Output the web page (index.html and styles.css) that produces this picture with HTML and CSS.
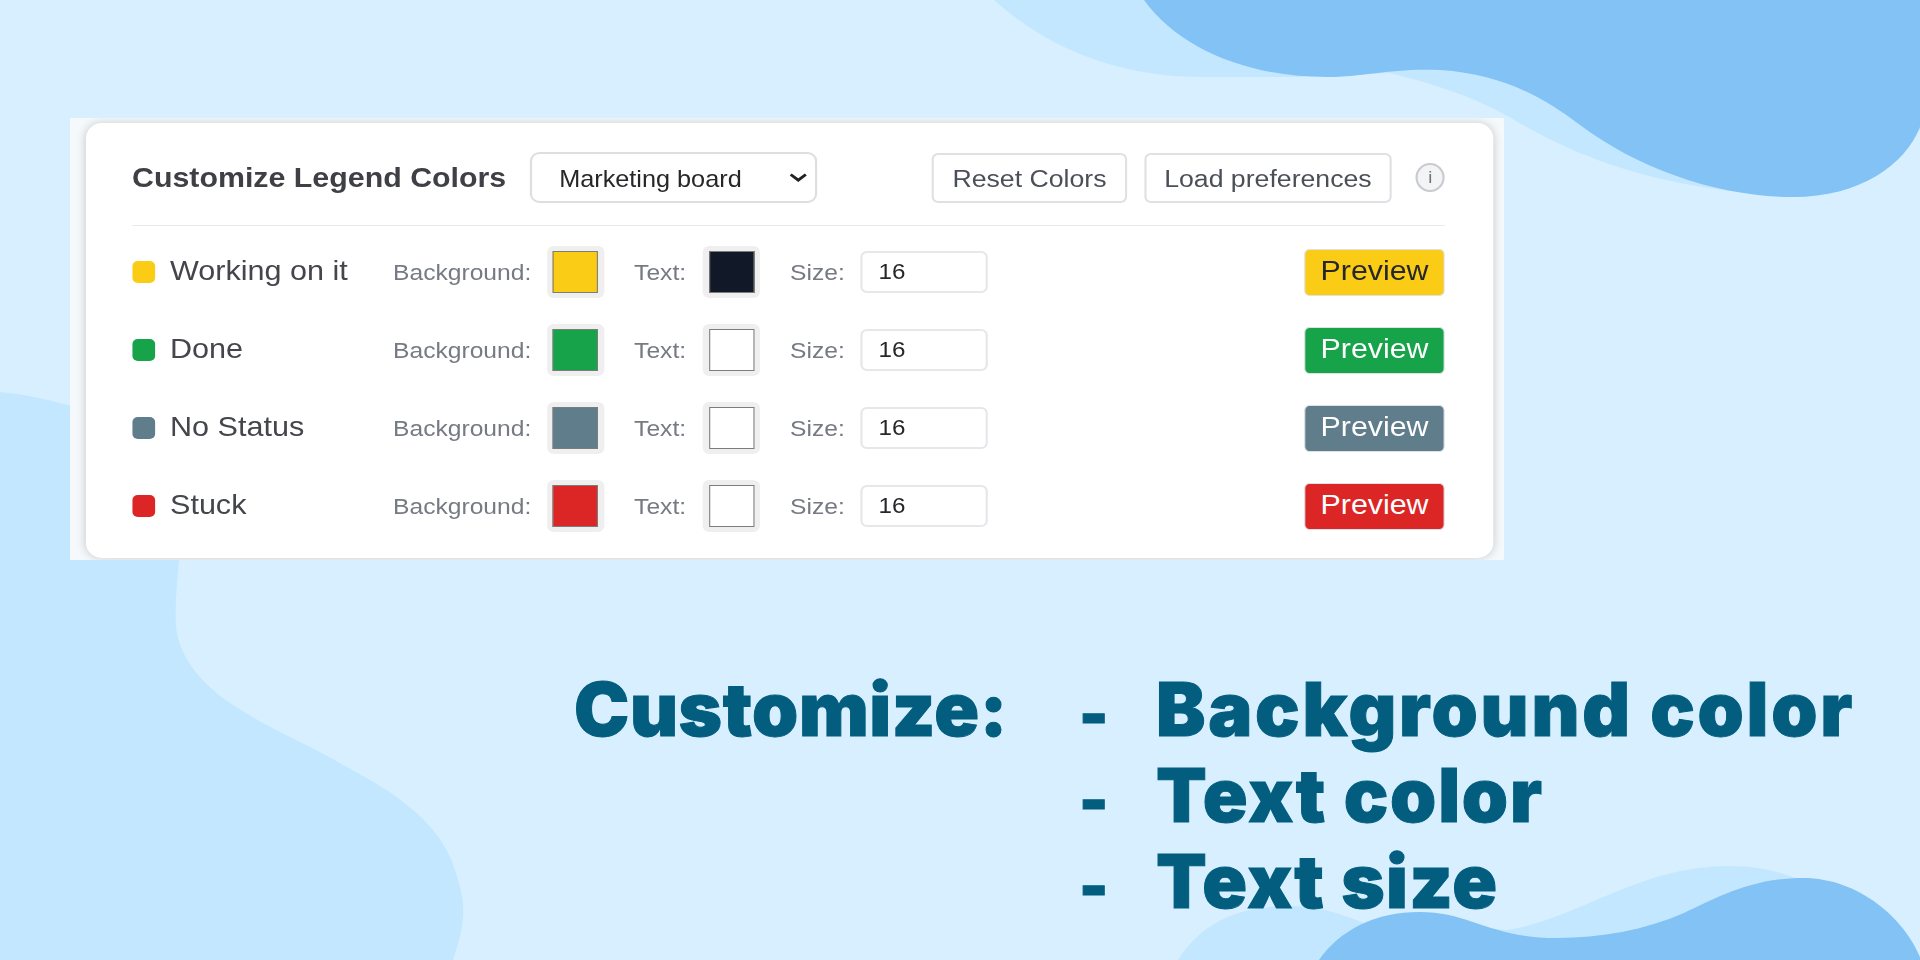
FILE: index.html
```html
<!DOCTYPE html>
<html lang="en">
<head>
<meta charset="utf-8">
<title>Customize Legend Colors</title>
<link rel="stylesheet" href="styles.css">
</head>
<body>
<svg class="waves" viewBox="0 0 1920 960" aria-hidden="true">
  <path class="light" d="M994 0C1050 50 1120 77 1205 77L1300 77L1389 73C1440 85 1480 100 1511 118C1590 165 1670 190 1800 197L1920 130V0Z"/>
  <path class="dark" d="M1144 0C1180 50 1250 77 1327 77C1365 77 1390 68 1440 70C1500 74 1540 95 1580 125C1640 170 1720 197 1793 197C1860 197 1905 165 1920 127V0Z"/>
  <path class="light" d="M0 392C30 395 50 400 70 406L179 560C176 590 175 615 176 625C177 650 195 680 233 705C270 730 310 745 343 765C390 790 440 820 455 870C463 895 464 905 463 918C462 930 458 945 453 960H0Z"/>
  <path class="light" d="M1178 960C1200 925 1235 906 1290 906C1325 906 1350 918 1367 924L1508 930C1580 918 1640 866 1728 866C1760 866 1780 872 1800 880L1920 960Z"/>
  <path class="dark" d="M1319 960C1340 930 1375 912 1420 912C1470 912 1490 938 1557 938C1600 938 1645 930 1684 913C1715 899 1750 878 1803 878C1860 878 1905 920 1920 957V960Z"/>
</svg>
<main class="page">
  <section class="shot">
    <div class="card">
      <header class="card-head">
        <h1 class="card-title">Customize Legend Colors</h1>
        <select class="board">
          <option>Marketing board</option>
        </select>
        <button class="btn btn-reset">Reset Colors</button>
        <button class="btn btn-load">Load preferences</button>
        <span class="info">i</span>
      </header>
      <div class="row">
        <span class="dot dot-yellow"></span>
        <span class="name">Working on it</span>
        <label class="label label-bg">Background:</label>
        <input class="swatch" type="color" value="#facc15">
        <label class="label label-text">Text:</label>
        <input class="swatch" type="color" value="#111827">
        <label class="label label-size">Size:</label>
        <input class="size" type="number" value="16">
        <span class="preview pv-yellow">Preview</span>
      </div>
      <div class="row">
        <span class="dot dot-green"></span>
        <span class="name">Done</span>
        <label class="label label-bg">Background:</label>
        <input class="swatch" type="color" value="#16a34a">
        <label class="label label-text">Text:</label>
        <input class="swatch" type="color" value="#ffffff">
        <label class="label label-size">Size:</label>
        <input class="size" type="number" value="16">
        <span class="preview pv-green">Preview</span>
      </div>
      <div class="row">
        <span class="dot dot-slate"></span>
        <span class="name">No Status</span>
        <label class="label label-bg">Background:</label>
        <input class="swatch" type="color" value="#607d8b">
        <label class="label label-text">Text:</label>
        <input class="swatch" type="color" value="#ffffff">
        <label class="label label-size">Size:</label>
        <input class="size" type="number" value="16">
        <span class="preview pv-slate">Preview</span>
      </div>
      <div class="row">
        <span class="dot dot-red"></span>
        <span class="name">Stuck</span>
        <label class="label label-bg">Background:</label>
        <input class="swatch" type="color" value="#dc2626">
        <label class="label label-text">Text:</label>
        <input class="swatch" type="color" value="#ffffff">
        <label class="label label-size">Size:</label>
        <input class="size" type="number" value="16">
        <span class="preview pv-red">Preview</span>
      </div>
    </div>
  </section>
  <section class="caption">
    <h2 class="cap-title">Customize:</h2>
    <ul class="cap-list">
      <li class="cap-item cap-bg"><span class="cap-dash">-</span>Background color</li>
      <li class="cap-item cap-color"><span class="cap-dash">-</span>Text color</li>
      <li class="cap-item cap-size"><span class="cap-dash">-</span>Text size</li>
    </ul>
  </section>
</main>
</body>
</html>
```
FILE: styles.css
```css
* { box-sizing: border-box; }
html, body { margin: 0; height: 100%; }
body {
  background: #d7effe;
  font-family: "Liberation Sans", Arial, sans-serif;
  overflow: hidden;
  position: relative;
  width: 1920px;
  height: 960px;
}
.waves { position: absolute; inset: 0; width: 1920px; height: 960px; display: block; }
.light { fill: #c2e7fe; }
.dark { fill: #83c2f4; }
.page { position: relative; padding: 118px 0 0 70px; }

.shot {
  width: 1434px;
  height: 442px;
  padding: 5px 0 0 16px;
  background: #f6f9fb;
  overflow: hidden;
}
.card {
  width: 1302.8px;
  height: 435px;
  padding: 29px 44.4px 0 42.6px;
  background: #fff;
  border-radius: 15px;
  box-shadow: 0 0 9px rgba(0, 0, 0, .18);
  transform: scaleX(1.08);
  transform-origin: 0 0;
  filter: blur(.6px);
  color: #3f3f46;
}
.card-head {
  display: flex;
  align-items: center;
  height: 74px;
  padding-bottom: 22px;
  margin-bottom: 7px;
  border-bottom: 1px solid #e8eaec;
}
.card-title { margin: 0; font-size: 28.1px; font-weight: 700; white-space: nowrap; width: 368.5px; }
.board {
  appearance: none;
  width: 265.7px;
  height: 51px;
  padding: 2px 30px 0 25px;
  font: 23.4px "Liberation Sans", sans-serif;
  color: #27272a;
  background: #fff url("data:image/svg+xml,%3Csvg xmlns='http://www.w3.org/2000/svg' width='17' height='9' viewBox='0 0 17 9'%3E%3Cpath d='M1.5 1.5 8.5 7.2l7-5.7' fill='none' stroke='%23222' stroke-width='2.8'/%3E%3C/svg%3E") no-repeat right 7px center;
  border: 2px solid #dcdee1;
  border-radius: 9px;
}
.btn {
  height: 50px;
  font: 24.7px "Liberation Sans", sans-serif;
  color: #4b5058;
  background: #fff;
  border: 2px solid #dfe1e4;
  border-radius: 6px;
  padding: 2px 0 0;
}
.btn-reset { width: 180.6px; margin-left: 106.5px; }
.btn-load { width: 229.6px; margin-left: 15.7px; }
.info {
  width: 26.9px;
  height: 29px;
  margin-left: 22.2px;
  border-radius: 50%;
  background: #f3f4f6;
  border: 2px solid #c9cbd0;
  color: #6b7280;
  font-size: 17px;
  line-height: 25px;
  text-align: center;
}
.row { display: flex; align-items: center; height: 78px; }
.dot { width: 21.3px; height: 22px; border-radius: 5px; }
.dot-yellow { background: #facc15; }
.dot-green { background: #16a34a; }
.dot-slate { background: #607d8b; }
.dot-red { background: #dc2626; }
.name { width: 220.4px; padding: 0 0 3px 13.9px; font-size: 28.3px; color: #44464b; }
.label { font-size: 22.8px; color: #767a83; }
.label-bg { width: 142.6px; }
.label-text { width: 63.9px; margin-left: 27.8px; }
.label-size { width: 64.8px; margin-left: 27.8px; }
.swatch {
  width: 52.8px;
  height: 52px;
  padding: 5px 5.5px;
  border: 0;
  border-radius: 6px;
  background: #efefef;
}
.swatch::-webkit-color-swatch-wrapper { padding: 0; }
.swatch::-webkit-color-swatch { border: 1.8px solid #7c7c7c; border-radius: 0; }
.size {
  width: 118.5px;
  height: 42px;
  padding: 0 0 0 15px;
  font: 22.4px "Liberation Sans", sans-serif;
  color: #27272a;
  background: #fff;
  border: 2px solid #e5e7ea;
  border-radius: 6px;
}
.preview {
  width: 130.6px;
  height: 47px;
  margin-left: auto;
  border: 1px solid #dfe1e4;
  border-radius: 5px;
  font-size: 28.1px;
  line-height: 42px;
  text-align: center;
  color: #fff;
}
.pv-yellow { background: #facc15; color: #27272a; }
.pv-green { background: #16a34a; }
.pv-slate { background: #607d8b; }
.pv-red { background: #dc2626; }

.caption {
  display: flex;
  margin: 106px 0 0 504px;
  color: #025d7f;
  font-family: Inter, "Liberation Sans", sans-serif;
  font-size: 74px;
  font-weight: 900;
  line-height: 86px;
  -webkit-text-stroke: 1px #025d7f;
}
.cap-title { margin: 0; width: 508px; font: inherit; letter-spacing: .6px; }
.cap-list { margin: 0; padding: 0; list-style: none; }
.cap-item { display: flex; align-items: baseline; white-space: nowrap; height: 86px; }
.cap-bg { letter-spacing: 2.75px; }
.cap-color { letter-spacing: 1.8px; }
.cap-size { letter-spacing: 1.3px; }
.cap-dash { width: 77px; margin-left: -3px; font-size: 62px; line-height: 60px; letter-spacing: 0; }
```
